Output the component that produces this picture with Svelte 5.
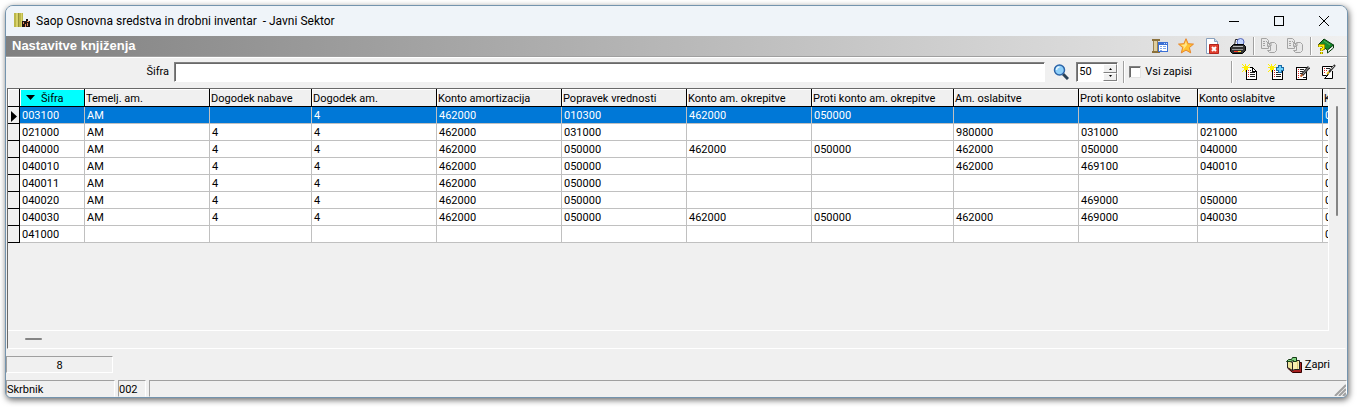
<script lang="ts">
	let filter = $state('');
	let limit = $state(50);
	let showAll = $state(false);
	let selected = $state(0);

	const columns = [
		{ title: 'Šifra', cls: 'c-code' },
		{ title: 'Temelj. am.', cls: 'c-std' },
		{ title: 'Dogodek nabave', cls: 'c-event' },
		{ title: 'Dogodek am.', cls: 'c-std' },
		{ title: 'Konto amortizacija', cls: 'c-std' },
		{ title: 'Popravek vrednosti', cls: 'c-std' },
		{ title: 'Konto am. okrepitve', cls: 'c-std' },
		{ title: 'Proti konto am. okrepitve', cls: 'c-wide' },
		{ title: 'Am. oslabitve', cls: 'c-std' },
		{ title: 'Proti konto oslabitve', cls: 'c-mid' },
		{ title: 'Konto oslabitve', cls: 'c-std' },
		{ title: 'K', cls: 'c-std' }
	];

	const rows = [
		['003100', 'AM', '', '4', '462000', '010300', '462000', '050000', '', '', '', '0'],
		['021000', 'AM', '4', '4', '462000', '031000', '', '', '980000', '031000', '021000', '0'],
		['040000', 'AM', '4', '4', '462000', '050000', '462000', '050000', '462000', '050000', '040000', '0'],
		['040010', 'AM', '4', '4', '462000', '050000', '', '', '462000', '469100', '040010', '0'],
		['040011', 'AM', '4', '4', '462000', '050000', '', '', '', '', '', '0'],
		['040020', 'AM', '4', '4', '462000', '050000', '', '', '', '469000', '050000', '0'],
		['040030', 'AM', '4', '4', '462000', '050000', '462000', '050000', '462000', '469000', '040030', '0'],
		['041000', '', '', '', '', '', '', '', '', '', '', '0']
	];
</script>

{#snippet sheet()}
	<path d="M4.5 3.5h6l4 4v8h-10z" fill="#fff" stroke="#000" />
	<path d="M10.5 3.500v4h4" fill="none" stroke="#000" />
	<path d="M6 6h1v1H6zM6 8h1v1H6zM6 10h1v1H6zM6 12h1v1H6z" fill="#d22" />
	<path d="M8 6h1v1H8zM8 8h5v1H8zM8 10h5v1H8zM8 12h5v1H8z" fill="#222" />
{/snippet}

{#snippet spark()}
	<path d="M2 2h4v4H2zM3 0h1v8H3zM0 3h8v1H0zM0 0h1v1H0zM1 1h1v1H1zM7 0h1v1H7zM6 1h1v1H6zM0 7h1v1H0zM1 6h1v1H1z" fill="#ffee00" />
{/snippet}

<div class="window">
	<header class="titlebar">
		<svg class="app-icon" viewBox="0 0 16 16" shape-rendering="crispEdges">
			<path d="M0 0h9v14H0z" fill="#bcb84b" />
			<path d="M2 0h2v14H2zM7 0h1v14H7z" fill="#d8d36c" />
			<path d="M4 0h1v14H4z" fill="#98943a" />
			<path d="M8 8h4v6H8zM12 6h2v2h2v6h-4z" fill="#201510" />
			<path d="M9 9h1v2H9zM11 11h1v3h-1zM13 8h2v1h-2zM13 10h1v3h-1z" fill="#e38a58" />
		</svg>
		<h1>Saop Osnovna sredstva in drobni inventar&nbsp; - Javni Sektor</h1>
		<div class="caption-buttons">
			<button aria-label="Minimiraj">
				<svg viewBox="0 0 12 12"><path d="M1 6.5h10" /></svg>
			</button>
			<button aria-label="Maksimiraj">
				<svg viewBox="0 0 12 12"><rect x="1.5" y="1.5" width="9" height="9" /></svg>
			</button>
			<button aria-label="Zapri okno">
				<svg viewBox="0 0 12 12"><path d="M1 1l10 10M11 1L1 11" /></svg>
			</button>
		</div>
	</header>

	<div class="heading">
		<h2>Nastavitve knjiženja</h2>
		<div class="tools">
			<div class="group">
				<button aria-label="Nastavitve stolpcev">
					<svg viewBox="0 0 16 16" shape-rendering="crispEdges">
						<path d="M0 1h8v2H0zM0 13h8v2H0z" fill="#8b713b" />
						<path d="M2 3h4v10H2z" fill="#e0cfa0" />
						<path d="M1 3h1v10H1zM5 3h1v10H5z" fill="#9a8350" />
						<path d="M6 4h10v10H6z" fill="#3b6fd4" />
						<path d="M7 7h8v6H7z" fill="#fff" />
						<path d="M8 8h2v1H8zM11 8h3v1h-3zM8 10h2v1H8zM11 10h3v1h-3zM8 12h2v1H8z" fill="#7fa6ea" />
						<path d="M12 5h1v1h-1zM14 5h1v1h-1z" fill="#cfe0ff" />
					</svg>
				</button>
				<button aria-label="Priljubljene">
					<svg viewBox="0 0 16 16">
						<path d="M8 .7l2.100 5 5.400.4-4.100 3.500 1.300 5.300L8 12.100l-4.700 2.800 1.300-5.300L.5 6.100l5.400-.4z" fill="#ffc331" stroke="#e8852a" />
						<path d="M8 3l1 4-4 5 .8-3.200L3 7l3.600-.5z" fill="#ffe58c" />
					</svg>
				</button>
				<button aria-label="Počisti">
					<svg viewBox="0 0 16 16">
						<path d="M2.500.5h8l3 3v12h-11z" fill="#fff" stroke="#88a0bd" />
						<path d="M10.500.5v3h3" fill="#cfdcec" stroke="#88a0bd" />
						<path d="M5.500 6.500h9v9h-9z" fill="#e0402f" stroke="#b3221b" />
						<path d="M8 9l4 4M12 9l-4 4" stroke="#fff" stroke-width="2" />
					</svg>
				</button>
				<button aria-label="Tiskanje">
					<svg viewBox="0 0 16 16">
						<path d="M4.500 7.500l1-6h5l3 3v3z" fill="#fff" stroke="#222" />
						<circle cx="10.500" cy="4" r="3.500" fill="#c4d6ff" stroke="#5565b8" />
						<path d="M.5 9.500l3-3h10l2 2v4l-3 3h-10l-2-2z" fill="#333" stroke="#000" />
						<path d="M3 8.500h10" stroke="#bbb" />
						<path d="M2 11.500h11" stroke="#999" />
						<path d="M4 13.500h4" stroke="#ff3020" />
						<path d="M8 13.500h3" stroke="#ffe030" />
					</svg>
				</button>
			</div>
			<span class="divider"></span>
			<div class="group">
				{#each ['Kopiraj', 'Prilepi'] as label (label)}
					<button aria-label={label} disabled>
						<svg viewBox="0 0 16 16" fill="#e8e8e8" stroke="#a4a4a4">
							<path d="M.5.5h5l2 2v8h-7zM2 3.500h2M2 5.500h2M2 7.500h2" />
							<path d="M6.500 5.500h3v-1h4l2 2v6l-2 2h-5l-2-2h3v-4h-3z" />
							<path d="M5 3l5 5M10 5v3H7" fill="none" />
						</svg>
					</button>
				{/each}
			</div>
			<span class="divider"></span>
			<button aria-label="Pomoč">
				<svg viewBox="0 0 16 16">
					<path d="M6 1l9.500 6-6 5L1 6z" fill="#178a2a" stroke="#063d0d" />
					<path d="M9.500 12l6-5v3l-6 5z" fill="#e9eee9" stroke="#063d0d" />
					<path d="M6 3l6 4" stroke="#51b75d" />
					<path d="M1.500 9V7.500h4v3l-2 1V13M3.500 14v2" fill="none" stroke="#443c00" stroke-width="3" />
					<path d="M1.500 9V7.500h4v3l-2 1V13M3.500 14v2" fill="none" stroke="#fff000" stroke-width="2" />
				</svg>
			</button>
		</div>
	</div>

	<form class="searchbar" onsubmit={(e) => e.preventDefault()}>
		<label class="filter-label" for="filter">Šifra</label>
		<input id="filter" class="filter" type="text" bind:value={filter} />
		<button class="find" aria-label="Išči">
			<svg viewBox="0 0 16 16">
				<path d="M10 10l5 5" stroke="#2b4257" stroke-width="3" />
				<circle cx="6.500" cy="6" r="5" fill="#8fd0fa" stroke="#2c64a8" stroke-width="1.500" />
				<path d="M3.500 6a3 3 0 0 1 3-3" fill="none" stroke="#e4f6ff" stroke-width="1.500" />
			</svg>
		</button>
		<div class="spin">
			<input type="text" inputmode="numeric" aria-label="Število zapisov" bind:value={limit} />
			<div class="steps">
				<button type="button" aria-label="Več" onclick={() => limit++}>
					<svg viewBox="0 0 5 3"><path d="M1 3l1.500-2L4 3z" /></svg>
				</button>
				<button type="button" aria-label="Manj" onclick={() => limit--}>
					<svg viewBox="0 0 5 3"><path d="M1 0l1.500 2L4 0z" /></svg>
				</button>
			</div>
		</div>
		<span class="divider"></span>
		<label class="all"><input type="checkbox" bind:checked={showAll} />Vsi zapisi</label>
		<span class="divider push"></span>
		<div class="record-tools">
			<button type="button" aria-label="Nov zapis">
				<svg viewBox="0 0 16 16" shape-rendering="crispEdges">{@render sheet()}{@render spark()}</svg>
			</button>
			<button type="button" aria-label="Kopiraj zapis">
				<svg viewBox="0 0 16 16" shape-rendering="crispEdges">
					{@render sheet()}{@render spark()}
					<path d="M10.500 1.500h3v2h2v3h-2v2h-3v-2h-2v-3h2z" fill="#6fd0fa" stroke="#1a6aa6" />
				</svg>
			</button>
			<button type="button" aria-label="Popravi zapis">
				<svg viewBox="0 0 16 16">
					<g shape-rendering="crispEdges">
						<path d="M2.500 3.500h10v12h-10z" fill="#fff" stroke="#000" />
						<path d="M4 5h1v1H4zM4 7h1v1H4zM4 9h1v1H4zM4 11h1v1H4zM4 13h1v1H4z" fill="#d22" />
						<path d="M6 5h4v1H6zM6 7h3v1H6zM6 9h2v1H6zM9 13h3v1H9z" fill="#222" />
					</g>
					<path d="M15 3l-7 8" stroke="#333" stroke-width="3" />
					<path d="M15 3l-6 7" stroke="#999" />
					<path d="M8.500 10.500l-2 2" stroke="#c0602a" stroke-width="2" />
				</svg>
			</button>
			<button type="button" aria-label="Briši zapis">
				<svg viewBox="0 0 16 16">
					<path d="M2.500 2.500h10l-3 6-3 3h-4z" fill="#fff" stroke="#000" />
					<path d="M12.500 7v7.500h-8l4-4" fill="#fff" stroke="#000" />
					<path d="M4 4h1v1H4zM4 6h1v1H4zM4 8h1v1H4zM6 6h1v1H6z" fill="#d22" />
					<path d="M6 4h4v1H6z" fill="#222" />
					<path d="M15 1L9 8" stroke="#333" stroke-width="2" />
					<path d="M14 2l-3 3" stroke="#bbb" />
					<path d="M9 8l-2 2" stroke="#e8c020" stroke-width="2" />
				</svg>
			</button>
		</div>
	</form>

	<main class="grid">
		<div class="grid-view">
			<table>
				<colgroup>
					<col class="c-mark" />
					{#each columns as col (col.title)}
						<col class={col.cls} />
					{/each}
				</colgroup>
				<thead>
					<tr>
						<th class="mark"></th>
						{#each columns as col, i (col.title)}
							<th class:sorted={i === 0} scope="col">
								{#if i === 0}
									<svg class="sort" viewBox="0 0 9 5"><path d="M0 0h9L4.500 5z" /></svg>
								{/if}{col.title}
							</th>
						{/each}
					</tr>
				</thead>
				<tbody>
					{#each rows as row, r (row[0])}
						<tr class:selected={r === selected} onclick={() => (selected = r)}>
							<td class="mark">
								{#if r === selected}
									<svg class="pointer" viewBox="0 0 6 11"><path d="M0 0l6 5.500L0 11z" /></svg>
								{/if}
							</td>
							{#each row as value, c (c)}
								<td>{value}</td>
							{/each}
						</tr>
					{/each}
				</tbody>
			</table>
		</div>
		<div class="vscroll"><i></i></div>
		<div class="hscroll"><i></i></div>
	</main>

	<div class="bottom">
		<output class="count">{rows.length}</output>
		<button class="close">
			<svg viewBox="0 0 16 16">
				<path d="M1.500 5v6l5 4.500h9V5.500h-2z" fill="#a82020" stroke="#300" />
				<path d="M1.500 3.500l5 2v8l-5-3z" fill="#efe49a" stroke="#222" />
				<path d="M6.500 5.500l2-2h5v9h-5l-2 1z" fill="#f7f0b0" stroke="#222" />
				<path d="M11.500 4v8" stroke="#d8cb78" />
				<path d="M.5 4.500l2-2h3l1-2h4v4h-3v-1l-3 1z" fill="#7ed07e" stroke="#143c14" />
			</svg>
			<span><u>Z</u>apri</span>
		</button>
	</div>

	<footer class="status">
		<span class="user">Skrbnik</span>
		<span class="code">002</span>
		<span class="message"></span>
		<svg class="grip" viewBox="0 0 12 12">
			<path d="M1 12L12 1M5 12l7-7M9 12l3-3" />
		</svg>
	</footer>
</div>

<style>
	:global(body) {
		background: #fff;
	}
	.window {
		margin: 5px 9px 9px 5px;
		border: 1px solid #7494ae;
		border-radius: 8px 8px 6px 6px;
		overflow: hidden;
		background: #f0f0f0;
		box-shadow: 1px 2px 6px rgba(0, 0, 0, 0.6);
		font: 11px/14px Roboto, sans-serif;
		color: #000;
	}
	button,
	input {
		font: inherit;
		color: inherit;
	}
	button {
		display: flex;
		align-items: center;
		justify-content: center;
		padding: 0;
		border: 0;
		background: none;
	}
	h1,
	h2 {
		margin: 0;
	}

	/* Title bar */
	.titlebar {
		display: flex;
		align-items: center;
		height: 30px;
		padding-left: 8px;
		background: #eff4f9;
	}
	.app-icon {
		width: 16px;
		height: 16px;
		margin-right: 6px;
	}
	h1 {
		font: 12px/16px Roboto, sans-serif;
	}
	.caption-buttons {
		display: flex;
		margin-left: auto;
		padding-right: 1px;
	}
	.caption-buttons button {
		width: 45px;
		height: 28px;
	}
	.caption-buttons svg {
		width: 12px;
		height: 12px;
		fill: none;
		stroke: #000;
	}

	/* Heading strip */
	.heading {
		display: flex;
		align-items: center;
		justify-content: space-between;
		height: 20px;
		padding: 0 13px 0 6px;
		background: linear-gradient(90deg, #808080, #f0f0f0);
	}
	h2 {
		font: bold 13px/18px 'Liberation Sans', Arial, sans-serif;
		color: #fff;
	}
	.tools,
	.group {
		display: flex;
		align-items: center;
	}
	.tools {
		gap: 7px;
	}
	.group {
		gap: 10px;
	}
	.tools svg,
	.find svg,
	.record-tools svg,
	.close svg {
		width: 16px;
		height: 16px;
	}
	.divider {
		width: 1px;
		height: 22px;
		background: #a0a0a0;
		box-shadow: 1px 0 #fff;
	}
	.tools .divider {
		height: 18px;
	}

	/* Search bar */
	.searchbar {
		display: flex;
		align-items: center;
		height: 30px;
		border-top: 1px solid #a0a0a0;
		box-shadow: inset 0 1px #fff;
		padding-right: 11px;
	}
	.filter-label {
		width: 163px;
		margin-right: 5px;
		text-align: right;
	}
	.filter,
	.spin {
		box-sizing: border-box;
		height: 20px;
		border: 1px solid;
		border-color: #808080 #fff #fff #808080;
		box-shadow: inset 1px 1px #696969;
		background: #fff;
	}
	.filter {
		flex: 1;
		min-width: 0;
		padding: 0 4px;
	}
	.find {
		width: 31px;
	}
	.spin {
		display: flex;
		width: 42px;
	}
	.spin input {
		width: 24px;
		padding: 0 0 0 2px;
		border: 0;
		background: none;
	}
	.steps {
		display: flex;
		flex-direction: column;
		flex: 1;
		padding: 1px 0 0;
	}
	.steps button {
		flex: 1;
		background: #f0f0f0;
		border: 1px solid;
		border-color: #fff #808080 #808080 #fff;
	}
	.steps svg {
		width: 5px;
		height: 3px;
	}
	.searchbar > .divider {
		margin-left: 5px;
	}
	.all {
		display: flex;
		align-items: center;
		gap: 4px;
		margin-left: 5px;
	}
	.all input {
		appearance: none;
		box-sizing: border-box;
		width: 12px;
		height: 12px;
		margin: 0;
		border: 1px solid;
		border-color: #808080 #e3e3e3 #e3e3e3 #808080;
		box-shadow: inset 1px 1px #696969;
		background: #fff;
	}
	.all input:checked {
		background: #0078d7;
	}
	.searchbar > .push {
		margin-left: 39px;
	}
	.record-tools {
		display: flex;
		gap: 10px;
		margin-left: 10px;
	}

	/* Data grid */
	.grid {
		display: grid;
		grid-template: 242px 17px / minmax(0, 1fr) 16px;
		margin: 1px 1px 0;
		border: 1px solid;
		border-color: #696969 #f0f0f0 #fff #696969;
	}
	.grid-view {
		overflow: hidden;
		border-right: 1px solid #fff;
		border-bottom: 1px solid #fff;
	}
	table {
		width: 1428px;
		table-layout: fixed;
		border-collapse: separate;
		border-spacing: 0;
	}
	.c-mark {
		width: 12px;
	}
	.c-code {
		width: 65px;
	}
	.c-event {
		width: 102px;
	}
	.c-std {
		width: 125px;
	}
	.c-mid {
		width: 119px;
	}
	.c-wide {
		width: 142px;
	}
	th,
	td {
		box-sizing: border-box;
		height: 17px;
		padding: 2px 0 0 2px;
		overflow: hidden;
		line-height: 14px;
		white-space: nowrap;
		text-align: left;
		font-weight: normal;
	}
	th {
		height: 18px;
		padding-left: 1px;
		border-right: 1px solid #000;
		border-bottom: 1px solid #000;
		box-shadow: inset 1px 1px #fff;
		background: #f0f0f0;
	}
	td {
		border-right: 1px solid #c0c0c0;
		border-bottom: 1px solid #c0c0c0;
		background: #fff;
	}
	th.sorted {
		padding-left: 6px;
		background: #0ff;
	}
	.sort {
		width: 9px;
		height: 5px;
		margin: 0 6px 2px 0;
		vertical-align: middle;
	}
	.selected td {
		background: #0078d7;
		color: #fff;
	}
	td.mark,
	.selected td.mark {
		border-color: #000;
		background: #f0f0f0;
	}
	.pointer {
		display: block;
		width: 6px;
		height: 11px;
		margin-left: 1px;
		fill: #000;
	}
	.vscroll i,
	.hscroll i {
		display: block;
		border-radius: 1px;
		background: #858585;
	}
	.vscroll i {
		width: 2px;
		height: 110px;
		margin: 17px 0 0 7px;
	}
	.hscroll i {
		width: 17px;
		height: 2px;
		margin: 7px 0 0 17px;
	}

	/* Bottom */
	.bottom {
		display: flex;
		align-items: center;
		justify-content: space-between;
		height: 31px;
		padding-right: 17px;
	}
	.count {
		box-sizing: border-box;
		width: 107px;
		height: 17px;
		border: 1px solid;
		border-color: #a0a0a0 #fff #fff #a0a0a0;
		line-height: 17px;
		text-align: center;
	}
	.close {
		gap: 3px;
	}
	.status {
		display: flex;
		position: relative;
		gap: 3px;
		height: 17px;
	}
	.status span {
		box-sizing: border-box;
		border: 1px solid;
		border-color: #a0a0a0 #fff #f0f0f0 #a0a0a0;
		line-height: 17px;
	}
	.user {
		width: 109px;
	}
	.code {
		width: 28px;
	}
	.message {
		flex: 1;
	}
	.grip {
		position: absolute;
		right: 1px;
		bottom: 1px;
		width: 12px;
		height: 12px;
		stroke: #a0a0a0;
		stroke-width: 2;
	}
</style>
